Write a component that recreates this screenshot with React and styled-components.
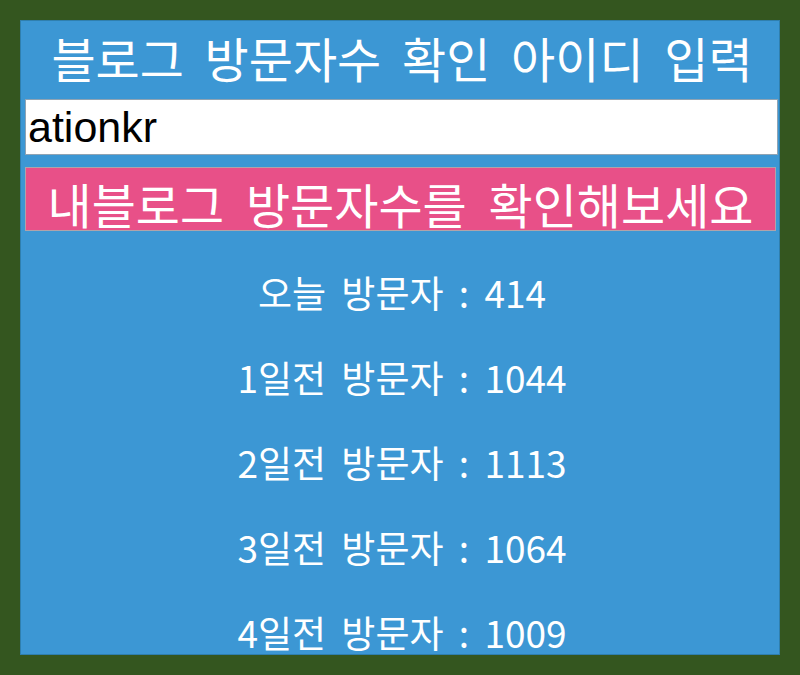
import React, { useState } from "react";
import styled, { createGlobalStyle } from "styled-components";

const GlobalStyle = createGlobalStyle`
  html, body {
    margin: 0;
    padding: 0;
    background-color: #34561f;
  }
  body {
    padding: 20px;
    font-family: "Noto Sans CJK KR", "Noto Sans", sans-serif;
  }
`;

const Panel = styled.div`
  width: 754px;
  height: 633px;
  background-color: #3c97d4;
  border: 1px solid #2f7fae;
  overflow: hidden;
  display: flex;
  flex-direction: column;
  padding-left: 4px;
  box-sizing: content-box;
`;

const Title = styled.h1`
  height: 78px;
  flex-shrink: 0;
  box-sizing: border-box;
  padding-bottom: 6px;
  margin: 0;
  display: flex;
  align-items: center;
  justify-content: center;
  color: #ffffff;
  font-size: 48px;
  font-weight: 400;
  word-spacing: 10px;
  white-space: nowrap;
`;

const IdInput = styled.input`
  flex-shrink: 0;
  width: 753px;
  height: 56px;
  box-sizing: border-box;
  border: 1px solid #8fa3b3;
  background: #ffffff;
  padding: 0 2px;
  font-family: "Liberation Sans", Arial, sans-serif;
  font-size: 43px;
  color: #000000;
  outline: none;
`;

const CheckButton = styled.button`
  flex-shrink: 0;
  margin-top: 12px;
  width: 751px;
  height: 64px;
  box-sizing: border-box;
  border: 1px solid #b0a3aa;
  background-color: #e85088;
  color: #ffffff;
  font-family: "Noto Sans CJK KR", "Noto Sans", sans-serif;
  font-size: 48px;
  word-spacing: 11px;
  white-space: nowrap;
  padding: 0 0 6px;
  cursor: pointer;
`;

const VisitList = styled.ul`
  flex-shrink: 0;
  list-style: none;
  margin: 0;
  padding: 18px 0 0;
  display: flex;
  flex-direction: column;
`;

const VisitItem = styled.li`
  height: 85px;
  flex-shrink: 0;
  display: flex;
  align-items: center;
  justify-content: center;
  color: #ffffff;
  font-size: 37px;
  word-spacing: 7px;
`;

const visits = [
  { label: "오늘 방문자", count: 414 },
  { label: "1일전 방문자", count: 1044 },
  { label: "2일전 방문자", count: 1113 },
  { label: "3일전 방문자", count: 1064 },
  { label: "4일전 방문자", count: 1009 },
];

export default function App() {
  const [blogId, setBlogId] = useState("ationkr");
  return (
    <>
      <GlobalStyle />
      <Panel>
        <Title>블로그 방문자수 확인 아이디 입력</Title>
        <IdInput value={blogId} onChange={(e) => setBlogId(e.target.value)} />
        <CheckButton>내블로그 방문자수를 확인해보세요</CheckButton>
        <VisitList>
          {visits.map((v) => (
            <VisitItem key={v.label}>
              {v.label} : {v.count}
            </VisitItem>
          ))}
        </VisitList>
      </Panel>
    </>
  );
}
